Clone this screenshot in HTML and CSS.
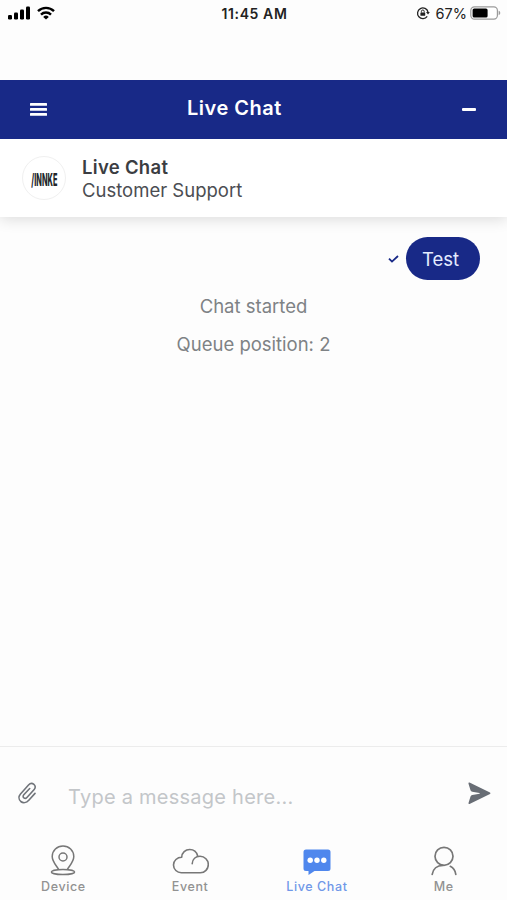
FILE: index.html
```html
<!DOCTYPE html>
<html lang="en">
<head>
    <meta charset="UTF-8">
    <meta name="viewport" content="width=device-width, initial-scale=1.0">
    <title>Live Chat</title>
    <link rel="stylesheet" href="styles.css">
</head>
<body>
    <div class="status-bar">
        <div class="status-left">
            <svg width="23" height="14" viewBox="0 0 23 14">
                <rect x="0" y="9" width="4" height="4.5" rx="1.2"/>
                <rect x="6" y="6.5" width="4" height="7" rx="1.2"/>
                <rect x="12" y="3.5" width="4" height="10" rx="1.2"/>
                <rect x="18" y="0.5" width="4" height="13" rx="1.2"/>
            </svg>
            <svg width="18" height="14" viewBox="0 0 18 14" fill="none" stroke="#000" stroke-width="2.4">
                <path d="M1 5.2a11.4 11.4 0 0 1 16 0"/>
                <path d="M4 8.6a7 7 0 0 1 10 0"/>
                <path d="M9 13.6l-2.8-2.7a4 4 0 0 1 5.6 0z" fill="#000" stroke="none"/>
            </svg>
        </div>
        <div class="status-time">11:45 AM</div>
        <div class="status-right">
            <svg width="14" height="14" viewBox="0 0 14 14" fill="none" stroke="#222" stroke-width="1.3">
                <path d="M11.2 10.3A5.3 5.3 0 1 1 12 6"/>
                <path d="M10 6h3.8l-1.8 2.6z" fill="#222" stroke="none"/>
                <rect x="4.4" y="6.4" width="4.8" height="3.4" rx=".6" fill="#222" stroke="none"/>
                <path d="M5.4 6.5V5.4a1.4 1.4 0 0 1 2.8 0v1.1" stroke-width="1"/>
            </svg>
            <span class="battery-text">67%</span>
            <svg width="31" height="14" viewBox="0 0 31 14">
                <rect x=".8" y=".8" width="26.6" height="12.4" rx="3.6" fill="#fff" stroke="#9b9b9b" stroke-width="1.2"/>
                <rect x="2.6" y="2.4" width="15" height="9.2" rx="1.6"/>
                <path d="M28.600 4.800c2.200.6 2.200 3.800 0 4.400z" fill="#9b9b9b"/>
            </svg>
        </div>
    </div>

    <div class="header">
        <svg width="17" height="13" viewBox="0 0 17 13" fill="#fff">
            <rect y="0" width="17" height="2.7" rx=".5"/>
            <rect y="5" width="17" height="2.7" rx=".5"/>
            <rect y="10" width="17" height="2.7" rx=".5"/>
        </svg>
        <h1>Live Chat</h1>
        <div class="minimize"></div>
    </div>

    <div class="agent">
        <div class="avatar">
            <span class="logo-text">/INNKE</span>
        </div>
        <div class="agent-info">
            <div class="agent-name">Live Chat</div>
            <div class="agent-role">Customer Support</div>
        </div>
    </div>

    <div class="messages">
        <div class="message">
            <svg width="11" height="8" viewBox="0 0 11 8" fill="none" stroke="#182987" stroke-width="1.8">
                <path d="M1 3.6l3 3L10 1"/>
            </svg>
            <div class="bubble">Test</div>
        </div>
        <p>Chat started</p>
        <p>Queue position: 2</p>
    </div>

    <div class="composer">
        <svg width="20" height="22" viewBox="0 0 20 22" fill="none" stroke="#70747a" stroke-width="1.6" stroke-linecap="round">
            <path d="M17 11.4l-6.2 6.9c-2.3 2.5-5.6 3.1-8 1.2-2.3-2.1-2.3-5.3-.3-7.6L10.5 3c1.6-1.7 3.8-1.9 5.4-.6 1.7 1.4 1.7 3.5.3 5.1l-7.3 8c-.9 1-2.1 1.1-3 .4-1-.8-1-2.1-.1-3.1l5.9-6.3"/>
        </svg>
        <div class="placeholder">Type a message here...</div>
        <svg width="23" height="23" viewBox="0 0 23 23" fill="#686d75">
            <path d="M1.5.6Q.2.3.5 1.7L2.500 8.200Q2.900 9.500 4.300 9.700L11.500 10.900Q12.200 11.300 11.500 11.700L4.300 12.900Q2.900 13.100 2.500 14.400L.5 20.900Q.2 22.300 1.500 22L22 12.100Q23 11.300 22 10.500z"/>
        </svg>
    </div>

    <div class="tabs">
        <div class="tab">
            <svg width="26" height="32" viewBox="0 0 26 32" fill="none" stroke="#777" stroke-width="1.5">
                <path d="M8.700 24.500C6.500 20.500 2.200 16.800 2.200 11.500a10.800 10.600 0 0 1 21.600 0c0 5.300-4.300 9-6.500 13"/>
                <circle cx="13" cy="12" r="4"/>
                <ellipse cx="13" cy="27" rx="11.600" ry="2.600"/>
            </svg>
            <span>Device</span>
        </div>
        <div class="tab">
            <svg width="37" height="32" viewBox="0 0 37 32" fill="none" stroke="#777" stroke-width="1.6" stroke-linecap="round">
                <path d="M9.700 12.300C9.800 7.600 13.500 4.500 17.700 4.500c4 0 7 2.600 8 6.500M20.200 18.700c.3-4.400 3.400-7.400 7.800-7.400 4.700 0 8.300 3.700 8.300 8.200s-3.500 8.300-8 8.300H9.300c-4.200 0-7.800-3.400-7.800-7.800s3.700-7.700 8.200-7.700"/>
            </svg>
            <span>Event</span>
        </div>
        <div class="tab active">
            <svg width="28" height="32" viewBox="0 0 28 32">
                <path d="M3 4.500h22q2.500 0 2.500 2.500V23.500q0 2.500-2.500 2.500H11.500L5.500 30v-4H3Q.5 26 .5 23.500V7Q.5 4.500 3 4.500z" fill="#4f87ed"/>
                <g fill="#fff">
                    <circle cx="7.200" cy="15.300" r="2.700"/>
                    <circle cx="14" cy="15.300" r="2.700"/>
                    <circle cx="20.800" cy="15.300" r="2.700"/>
                </g>
            </svg>
            <span>Live Chat</span>
        </div>
        <div class="tab">
            <svg width="26" height="32" viewBox="0 0 26 32" fill="none" stroke="#777" stroke-width="1.7" stroke-linecap="round">
                <circle cx="13" cy="11.300" r="9"/>
                <path d="M1.200 29.300C2 24.100 5.900 20.300 12 20.300M24.800 29.300c-.5-3.600-2.500-6.400-5.500-8"/>
            </svg>
            <span>Me</span>
        </div>
    </div>
</body>
</html>
```
FILE: styles.css
```css
* {
    box-sizing: border-box;
}
body {
    font-family: Inter, "Liberation Sans", sans-serif;
    background-color: #fdfdfd;
    color: #3b3d42;
    margin: 0;
    height: 900px;
    display: flex;
    flex-direction: column;
    overflow: hidden;
}
svg {
    display: block;
    flex: none;
}
.status-bar {
    height: 80px;
    padding: 6px 6px 0 8px;
    display: grid;
    grid-template-columns: 1fr auto 1fr;
    align-items: start;
    color: #222;
    font-size: 14px;
    line-height: 16px;
}
.status-left {
    display: flex;
    gap: 6px;
}
.status-time {
    font-weight: 600;
    letter-spacing: 0.6px;
}
.status-right {
    display: flex;
    justify-content: flex-end;
}
.battery-text {
    margin: 0 3px 0 6px;
    font-size: 14.5px;
}
.header {
    height: 59px;
    background-color: #182987;
    color: white;
    padding: 0 31px 0 30px;
    display: grid;
    grid-template-columns: 157px 1fr auto;
    align-items: center;
}
.header h1 {
    margin: 0;
    padding-bottom: 4px;
    font-size: 20px;
    font-weight: 600;
    letter-spacing: 0.5px;
}
.minimize {
    width: 14px;
    height: 3px;
    background-color: white;
    border-radius: 1px;
}
.agent {
    height: 78px;
    padding: 0 22px;
    display: flex;
    align-items: center;
    gap: 16px;
    background-color: white;
    box-shadow: 0 2px 14px rgba(0, 0, 0, 0.14);
    clip-path: inset(0 0 -24px 0);
}
.avatar {
    width: 44px;
    height: 44px;
    border: 1px solid #f0f0f0;
    border-radius: 50%;
    display: flex;
    align-items: center;
    justify-content: center;
}
.logo-text {
    flex: none;
    font-size: 17px;
    line-height: 24px;
    font-weight: 800;
    color: #222529;
    padding-top: 3px;
    transform: scaleX(0.43);
}
.agent-info {
    padding-top: 2px;
    font-size: 18.5px;
    line-height: 23px;
}
.agent-name {
    font-weight: 600;
    letter-spacing: 0.3px;
}
.agent-role {
    color: #4b4d52;
}
.messages {
    flex: 1;
    padding: 20px 27px 0;
    font-size: 18.5px;
}
.message {
    display: flex;
    justify-content: flex-end;
    align-items: center;
    gap: 7px;
    margin-bottom: 8px;
}
.bubble {
    width: 74px;
    height: 43px;
    padding-right: 5px;
    line-height: 44px;
    text-align: center;
    color: #e4ebff;
    background-color: #182987;
    border-radius: 22px;
}
.messages p {
    margin: 0;
    line-height: 37.5px;
    text-align: center;
    color: #7e8285;
}
.composer {
    height: 93px;
    border-top: 1px solid #ececec;
    padding: 0 16px 0 18px;
    display: flex;
    align-items: center;
}
.placeholder {
    flex: 1;
    margin-left: 30px;
    padding-top: 8px;
    font-size: 20px;
    letter-spacing: 0.25px;
    color: #c3c6c9;
}
.tabs {
    height: 61px;
    padding: 6px 0 0;
    display: grid;
    grid-template-columns: repeat(4, 1fr);
}
.tab {
    display: flex;
    flex-direction: column;
    align-items: center;
    gap: 2px;
    font-size: 12.5px;
    font-weight: 500;
    line-height: 16px;
    letter-spacing: 0.6px;
    color: #929292;
}
.tab.active {
    color: #7098e8;
}
```
